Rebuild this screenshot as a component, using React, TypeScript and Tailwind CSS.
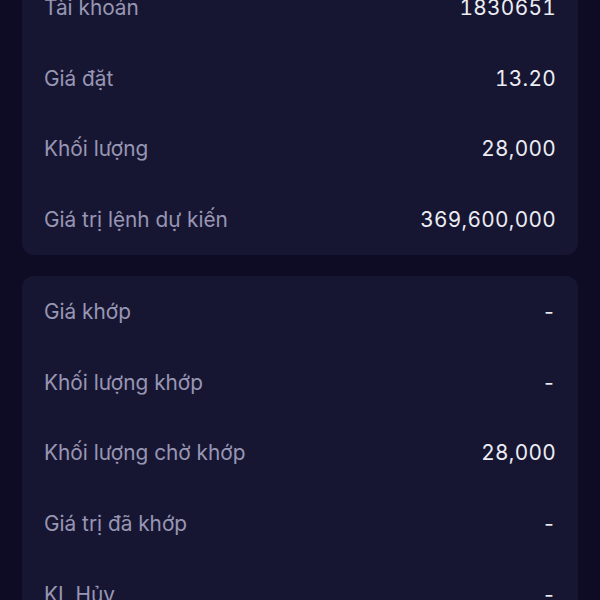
const orderRows = [
  { label: "Tài khoản", value: "1830651" },
  { label: "Giá đặt", value: "13.20" },
  { label: "Khối lượng", value: "28,000" },
  { label: "Giá trị lệnh dự kiến", value: "369,600,000" },
];

const matchRows = [
  { label: "Giá khớp", value: "-" },
  { label: "Khối lượng khớp", value: "-" },
  { label: "Khối lượng chờ khớp", value: "28,000" },
  { label: "Giá trị đã khớp", value: "-" },
  { label: "KL Hủy", value: "-" },
  { label: "Thời gian", value: "-" },
];

function InfoRow({ label, value }: { label: string; value: string }) {
  return (
    <div className="flex h-[70.75px] items-center justify-between px-[22px]">
      <span className="text-[20.8px] text-[#9896b4]">{label}</span>
      <span className="text-[20.8px] tabular-nums tracking-[0.3px] text-[#ececf3]">
        {value}
      </span>
    </div>
  );
}

function InfoCard({ rows }: { rows: { label: string; value: string }[] }) {
  return (
    <div className="overflow-hidden rounded-[12px] bg-[#171632]">
      {rows.map((row) => (
        <InfoRow key={row.label} label={row.label} value={row.value} />
      ))}
    </div>
  );
}

export default function App() {
  return (
    <div
      className="h-[600px] w-[600px] overflow-hidden bg-[#0d0c24]"
      style={{ fontFamily: "Inter, 'Noto Sans', sans-serif" }}
    >
      <div className="-mt-[28px] flex flex-col gap-[21px] px-[22px]">
        <InfoCard rows={orderRows} />
        <InfoCard rows={matchRows} />
      </div>
    </div>
  );
}
